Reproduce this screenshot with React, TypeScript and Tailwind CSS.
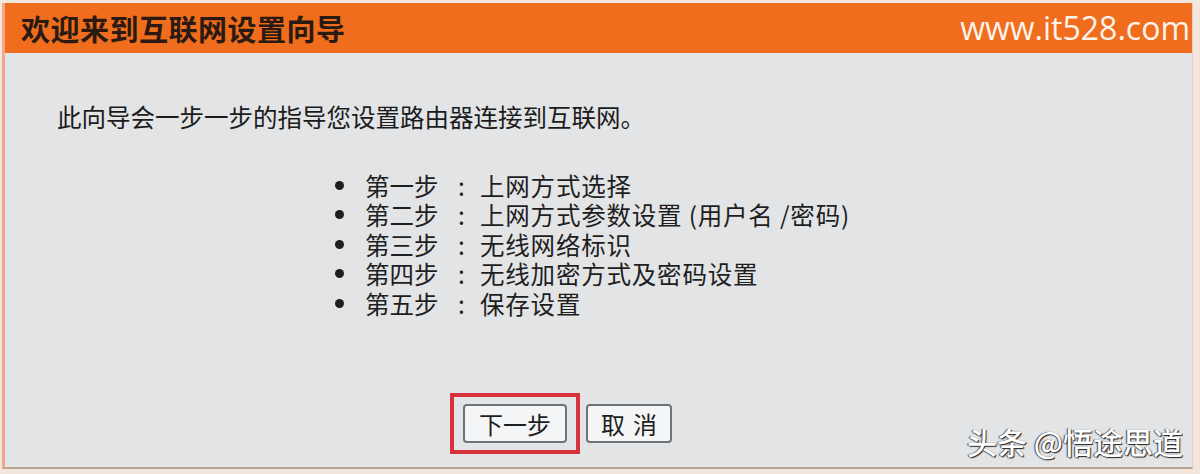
const cjk = { fontFamily: '"Noto Sans CJK SC", "Liberation Sans", sans-serif' };

const steps = [
  ['第一步', '上网方式选择'],
  ['第二步', '上网方式参数设置 (用户名 /密码)'],
  ['第三步', '无线网络标识'],
  ['第四步', '无线加密方式及密码设置'],
  ['第五步', '保存设置'],
];

export default function App() {
  return (
    <div className="w-[1200px] h-[474px] bg-[#f3e6dc] pt-[3px] pl-[2px] pr-[7px] overflow-hidden" style={cjk}>
      <div className="h-[466px] flex flex-col border-l-[3px] border-[#f2a889] border-b-[2px] border-b-[#b8a492] border-r border-r-[#e6cfc0]">
        <div className="h-[50px] bg-[#ef6d1d] flex items-center justify-between pl-[16px] pr-[2px]">
          <h1 className="text-[29px] font-bold tracking-[0.5px] text-[#2a1a12] leading-none">
            欢迎来到互联网设置向导
          </h1>
          <span
            className="text-[32px] text-[#fdf3ea] leading-none"
            style={{ fontFamily: '"Open Sans", "Liberation Sans", sans-serif' }}
          >
            www.it528.com
          </span>
        </div>

        <div className="flex-1 bg-[#e3e4e6] relative flex flex-col">
          <p className="mt-[52px] ml-[52px] text-[24.5px] text-[#1b1b1b] leading-none">
            此向导会一步一步的指导您设置路由器连接到互联网。
          </p>

          <ul className="mt-[41px] ml-[330px] flex flex-col text-[24.5px] text-[#1e1e1e] leading-[29.5px]">
            {steps.map(([step, text]) => (
              <li key={step} className="flex items-center">
                <span className="w-[9px] h-[9px] rounded-full bg-[#1e1e1e] mr-[21px]" />
                <span className="w-[93px]">{step}</span>
                <span className="w-[22px]">:</span>
                <span className="tracking-[0.8px]">{text}</span>
              </li>
            ))}
          </ul>

          <div className="mt-[75px] ml-[445px] flex items-center gap-[6px]">
            <div className="border-[4px] border-[#d8323c] px-[9px] py-[7px]">
              <button className="w-[104px] h-[39px] border-2 border-[#6e7378] rounded-[4px] bg-[#f4f5f6] text-[24px] text-[#1e1e1e] leading-none">
                下一步
              </button>
            </div>
            <button className="w-[86px] h-[39px] border-2 border-[#6e7378] rounded-[4px] bg-[#f4f5f6] text-[24px] text-[#1e1e1e] leading-none tracking-[8px] pl-[8px]">
              取消
            </button>
          </div>

          <span className="absolute right-[9px] bottom-[11px] text-[30px] font-medium text-white leading-none [text-shadow:1px_1px_1px_#222,-1px_0_1px_#444]">
            头条 @悟途思道
          </span>
        </div>
      </div>
    </div>
  );
}
